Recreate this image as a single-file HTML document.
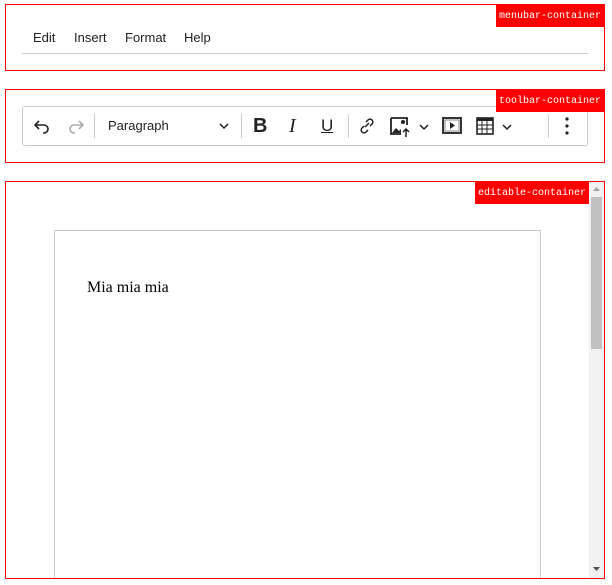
<!DOCTYPE html>
<html style="overflow:hidden;width:612px;height:585px"><head><style>
body{margin:0;width:612px;height:585px;background:#fff;position:relative;overflow:hidden;font-family:"Liberation Sans",sans-serif}
.box{position:absolute;border:1px solid #f00;box-sizing:border-box}
.lbl{position:absolute;background:#f00;color:#fff;font-family:"Liberation Mono",monospace;font-size:10px;line-height:23px;padding:0 3px;height:22px;white-space:nowrap;box-sizing:border-box;overflow:hidden}
.m{position:absolute;top:30px;font-size:13px;color:#222}
.ic{position:absolute}
.sep{position:absolute;top:114px;width:1px;height:24px;background:#ccc}
</style></head><body>
<div class="box" style="left:5px;top:4px;width:600px;height:67px"></div>
<div class="lbl" style="left:496px;top:5px;width:109px">menubar-container</div>
<div class="m" style="left:33px">Edit</div>
<div class="m" style="left:74px">Insert</div>
<div class="m" style="left:125px">Format</div>
<div class="m" style="left:184px">Help</div>
<div style="position:absolute;left:22px;top:53px;width:566px;height:1px;background:#ccc"></div>

<div class="box" style="left:5px;top:89px;width:600px;height:74px"></div>
<div style="position:absolute;left:22px;top:106px;width:566px;height:40px;border:1px solid #ccc;border-radius:3px;box-sizing:border-box"></div>
<div class="lbl" style="left:496px;top:90px;width:109px">toolbar-container</div>
<svg class="ic" style="left:32px;top:116px" width="20" height="20" viewBox="0 0 20 20"><path d="M7 5L3 9l4 4M3 9h9a4 4 0 0 1 0 8h-1" fill="none" stroke="#222" stroke-width="1.6"/></svg>
<svg class="ic" style="left:66px;top:116px" width="20" height="20" viewBox="0 0 20 20"><path d="M13 5l4 4-4 4M17 9H8a4 4 0 0 0 0 8h1" fill="none" stroke="#aaa" stroke-width="1.6"/></svg>
<div class="sep" style="left:94px"></div>
<div style="position:absolute;left:108px;top:118px;font-size:13px;color:#222">Paragraph</div>
<svg class="ic" style="left:218px;top:120px" width="12" height="12" viewBox="0 0 12 12"><path d="M2 4l4 4 4-4" fill="none" stroke="#222" stroke-width="1.5"/></svg>
<div class="sep" style="left:241px"></div>
<div style="position:absolute;left:253px;top:115px;font-size:20px;font-weight:bold;color:#222">B</div>
<div style="position:absolute;left:289px;top:115px;font-size:20px;font-style:italic;font-family:'Liberation Serif',serif;color:#222">I</div>
<div style="position:absolute;left:321px;top:116px;font-size:17px;text-decoration:underline;color:#222">U</div>
<div class="sep" style="left:348px"></div>
<svg class="ic" style="left:357px;top:116px" width="20" height="20" viewBox="0 0 20 20"><path d="M8 11l4-4M9 6l2-2a2.8 2.8 0 0 1 4 4l-2 2M11 14l-2 2a2.8 2.8 0 0 1-4-4l2-2" fill="none" stroke="#222" stroke-width="1.5"/></svg>
<svg class="ic" style="left:390px;top:117px" width="22" height="20" viewBox="0 0 22 20"><path d="M1 1h16v7M1 1v16h10" fill="none" stroke="#222" stroke-width="1.8"/><path d="M2 16l4-5 3 3 2-2v4z" fill="#222"/><circle cx="13" cy="5" r="2" fill="#222"/><path d="M16 20v-8M13 15l3-3 3 3" fill="none" stroke="#222" stroke-width="1.5"/></svg>
<svg class="ic" style="left:418px;top:121px" width="12" height="12" viewBox="0 0 12 12"><path d="M2 4l4 4 4-4" fill="none" stroke="#222" stroke-width="1.5"/></svg>
<svg class="ic" style="left:442px;top:117px" width="20" height="18" viewBox="0 0 20 18"><rect x="1" y="1" width="18" height="15" fill="none" stroke="#333" stroke-width="2"/><rect x="3" y="3" width="14" height="11" fill="#fff" stroke="#888"/><path d="M8 5v7l5-3.5z" fill="#222"/></svg>
<svg class="ic" style="left:476px;top:117px" width="18" height="18" viewBox="0 0 18 18"><rect x="1" y="1" width="16" height="16" fill="none" stroke="#222" stroke-width="1.6"/><rect x="1" y="1" width="16" height="3" fill="#222"/><path d="M1 8h16M1 12h16M6 4v13M11 4v13" stroke="#222"/></svg>
<svg class="ic" style="left:501px;top:121px" width="12" height="12" viewBox="0 0 12 12"><path d="M2 4l4 4 4-4" fill="none" stroke="#222" stroke-width="1.5"/></svg>
<div class="sep" style="left:548px"></div>
<svg class="ic" style="left:563px;top:116px" width="8" height="20" viewBox="0 0 8 20"><circle cx="4" cy="3" r="1.6" fill="#222"/><circle cx="4" cy="10" r="1.6" fill="#222"/><circle cx="4" cy="17" r="1.6" fill="#222"/></svg>

<div style="position:absolute;left:6px;top:182px;width:598px;height:396px;overflow:hidden">
<div style="position:absolute;left:48px;top:48px;width:487px;height:360px;border:1px solid #ccc;box-sizing:border-box"></div>
<div style="position:absolute;left:81px;top:97px;font-family:'Liberation Serif',serif;font-size:16px;color:#000">Mia mia mia</div>
</div>
<div class="box" style="left:5px;top:181px;width:600px;height:398px"></div>
<div style="position:absolute;left:589px;top:182px;width:15px;height:396px;background:#f1f1f1"></div>
<div style="position:absolute;left:591px;top:197px;width:11px;height:152px;background:#c1c1c1"></div>
<svg class="ic" style="left:592px;top:186px" width="9" height="6"><path d="M1 5l3.5-4 3.5 4z" fill="#a3a3a3"/></svg>
<svg class="ic" style="left:592px;top:566px" width="9" height="6"><path d="M1 1l3.5 4 3.5-4z" fill="#505050"/></svg>
<div class="lbl" style="left:475px;top:182px;width:114px">editable-container</div>
</body></html>
